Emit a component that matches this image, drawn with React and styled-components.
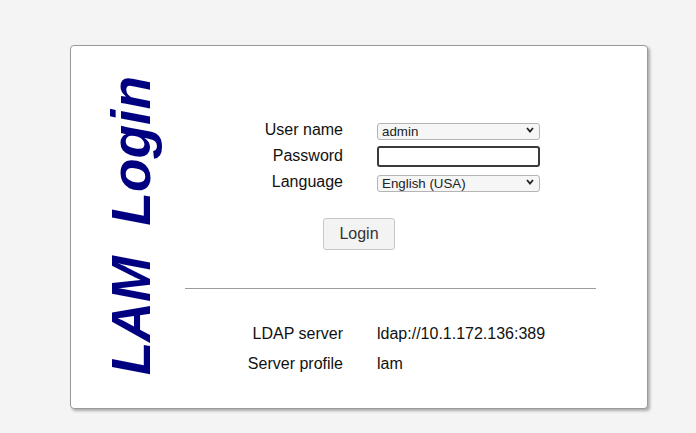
import React from 'react'
import styled, { createGlobalStyle } from 'styled-components'

const Global = createGlobalStyle`
  html, body {
    margin: 0;
    padding: 0;
    background: #f4f4f4;
    font-family: "Liberation Sans", Arial, sans-serif;
  }
`

const Page = styled.div`
  width: 696px;
  height: 433px;
  padding: 45px 0 0 70px;
  box-sizing: border-box;
`

const Card = styled.div`
  width: 578px;
  height: 364px;
  box-sizing: border-box;
  background: #fff;
  border: 1px solid #9a9a9a;
  border-radius: 4px;
  box-shadow: 2px 2px 3px rgba(0, 0, 0, 0.3);
  display: flex;
`

const Side = styled.div`
  width: 96px;
  padding: 30px 0 0 28px;
  box-sizing: border-box;
  display: flex;
  align-items: flex-start;
`

const VerticalTitle = styled.div`
  writing-mode: vertical-rl;
  transform: rotate(180deg);
  font-size: 55px;
  font-weight: bold;
  font-style: italic;
  color: #000080;
  white-space: nowrap;
`

const Main = styled.div`
  flex: 1;
  padding: 72px 0 0 18px;
`

const Grid = styled.div`
  display: grid;
  grid-template-columns: 158px 163px;
  grid-auto-rows: ${p => p.$row || 24}px;
  column-gap: 34px;
  align-items: center;
  font-size: 16px;
  color: #111;
`

const Label = styled.div`
  text-align: right;
  white-space: nowrap;
`

const Value = styled.div`
  white-space: nowrap;
`

const SelectWrap = styled.div`
  position: relative;
  height: 17px;
`

const Select = styled.select`
  appearance: none;
  width: 100%;
  height: 17px;
  box-sizing: border-box;
  margin: 0;
  padding: 0 0 0 4px;
  border: 1px solid #b4b4b4;
  border-radius: 3px;
  background: #f6f6f6;
  color: #222;
  font-family: "Liberation Sans", Arial, sans-serif;
  font-size: 13.33px;
  line-height: 15px;
  outline: none;
`

const Chevron = styled.svg`
  position: absolute;
  right: 6px;
  top: 5px;
  pointer-events: none;
`

const Input = styled.input`
  width: 100%;
  height: 21px;
  box-sizing: border-box;
  margin: 0;
  border: 2px solid #3a3a3a;
  border-radius: 3px;
  background: #fff;
  outline: none;
`

const ButtonRow = styled.div`
  padding: 24px 0 0 138px;
`

const Button = styled.button`
  width: 72px;
  height: 32px;
  border: 1px solid #c8c8c8;
  border-radius: 3px;
  background: #f3f3f3;
  color: #333;
  font-family: "Liberation Sans", Arial, sans-serif;
  font-size: 16px;
  padding: 0;
`

const Rule = styled.hr`
  width: 411px;
  margin: 38px 0 30px 0;
  border: 0;
  border-top: 1px solid #9c9c9c;
  height: 0;
`

function Dropdown({ value }) {
  return (
    <SelectWrap>
      <Select defaultValue={value}>
        <option>{value}</option>
      </Select>
      <Chevron width="8" height="6" viewBox="0 0 8 6">
        <polyline points="1,1 4,4.5 7,1" fill="none" stroke="#222" strokeWidth="1.8" />
      </Chevron>
    </SelectWrap>
  )
}

export default function App() {
  return (
    <Page>
      <Global />
      <Card>
        <Side>
          <VerticalTitle>LAM&nbsp;&nbsp;Login</VerticalTitle>
        </Side>
        <Main>
          <Grid as="form" onSubmit={e => e.preventDefault()} style={{ gridTemplateRows: '24px 28px 24px' }}>
            <Label>User name</Label>
            <Dropdown value="admin" />
            <Label>Password</Label>
            <Input type="password" />
            <Label>Language</Label>
            <Dropdown value="English (USA)" />
          </Grid>
          <ButtonRow>
            <Button>Login</Button>
          </ButtonRow>
          <Rule />
          <Grid $row={30}>
            <Label>LDAP server</Label>
            <Value>ldap://10.1.172.136:389</Value>
            <Label>Server profile</Label>
            <Value>lam</Value>
          </Grid>
        </Main>
      </Card>
    </Page>
  )
}
